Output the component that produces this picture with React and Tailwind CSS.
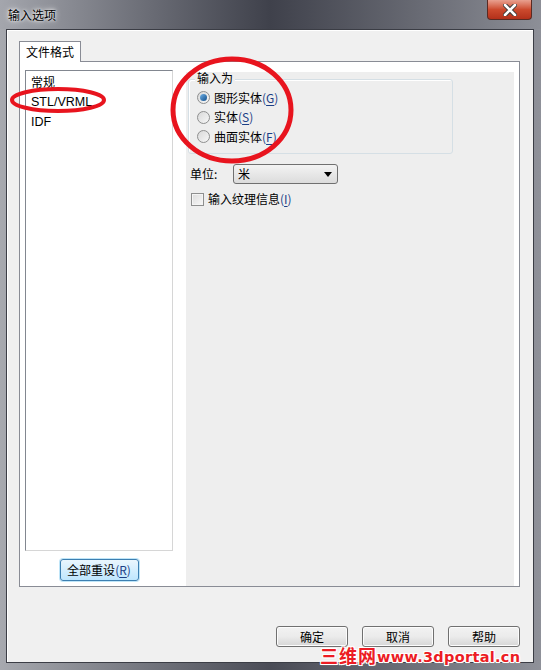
import React from 'react';

const font = "font-['Noto_Sans_CJK_SC','Noto_Sans',sans-serif]";

function Accel({ k }) {
  return (
    <span className="text-[#1d3f86]">
      (<span className="underline underline-offset-2">{k}</span>)
    </span>
  );
}

function Radio({ checked, children }) {
  return (
    <div className="flex h-[19.5px] items-center gap-[4px]">
      <span className="flex h-[13px] w-[13px] items-center justify-center rounded-full border border-[#8e8f8f] bg-gradient-to-br from-[#d9d9d9] to-[#f7f7f7]">
        {checked && <span className="h-[7px] w-[7px] rounded-full bg-gradient-to-br from-[#6fb1e6] to-[#0e4f8c]" />}
      </span>
      <span className="text-[12px] leading-none text-black">{children}</span>
    </div>
  );
}

function WinButton({ children, focused }) {
  return (
    <button
      className={
        focused
          ? 'flex h-[22px] w-[79px] items-center justify-center rounded-[3px] border border-[#3c7fb1] bg-gradient-to-b from-[#eaf6fd] to-[#bee6fd] text-[12px] text-black shadow-[0_0_0_1px_#bfe5f8]'
          : 'flex h-[21px] w-[72px] items-center justify-center rounded-[3px] border border-[#707070] bg-gradient-to-b from-[#f2f2f2] via-[#ebebeb] to-[#d6d6d6] text-[12px] text-black shadow-[inset_0_0_0_1px_#fcfcfc]'
      }
    >
      {children}
    </button>
  );
}

export default function App() {
  return (
    <div className={`relative h-[670px] w-[541px] overflow-hidden bg-white ${font}`}>
      <div className="flex h-full flex-col rounded-t-[6px] bg-gradient-to-r from-[#a7a9af] via-[#4a4c56] to-[#8f9199]">
        {/* title bar */}
        <div className="relative flex h-[29px] items-center bg-gradient-to-r from-[#a4a6ad] via-[#3f414b] to-[#8d8f97] pl-[8px]">
          <span className="text-[12px] text-black [text-shadow:0_0_6px_#fff,0_0_3px_#fff]">输入选项</span>
          <div className="absolute right-[9px] top-0 flex h-[20px] w-[45px] items-center justify-center rounded-b-[4px] border border-t-0 border-[#5a2a22] bg-gradient-to-b from-[#e8a08f] via-[#cc4a2e] to-[#b3301a]">
            <svg width="14" height="12" viewBox="0 0 14 12">
              <path d="M2 1 L12 11 M12 1 L2 11" stroke="#3a3a3a" strokeWidth="4.5" strokeLinecap="round" />
              <path d="M2 1 L12 11 M12 1 L2 11" stroke="#fff" strokeWidth="2.6" strokeLinecap="round" />
            </svg>
          </div>
        </div>

        {/* client area */}
        <div className="ml-[6px] mr-[7px] flex h-[634px] flex-col border border-[#3b3d45] bg-[#f0f0f0] pl-[12px] pt-[11px] shadow-[inset_1px_1px_0_#ffffff]">
          {/* tab header */}
          <div className="relative z-10 -mb-px flex h-[21px] w-[62px] items-center justify-center border border-b-0 border-[#898c95] bg-white text-[12px] text-black">
            文件格式
          </div>
          {/* tab panel */}
          <div className="flex h-[526px] w-[501px] border border-[#898c95] bg-white">
            <div className="ml-[5px] mt-[8px] flex w-[148px] flex-col items-center">
              <div className="h-[481px] w-[148px] border border-[#d6d6d6] border-l-[#828790] border-t-[#828790] bg-white pt-[1px] text-[12px] text-black">
                <div className="flex h-[20px] items-center px-[5px]">常规</div>
                <div className="flex h-[20px] items-center px-[5px] font-['Liberation_Sans',sans-serif] text-[12.5px]">STL/VRML</div>
                <div className="flex h-[20px] items-center px-[5px] font-['Liberation_Sans',sans-serif] text-[12.5px]">IDF</div>
              </div>
              <div className="mt-[8px]">
                <WinButton focused>
                  全部重设<Accel k="R" />
                </WinButton>
              </div>
            </div>

            <div className="ml-[13px] mr-[5px] mt-[10px] flex-1 bg-[#eeeeee] pl-[2px] pt-[7px]">
              {/* group box */}
              <div className="relative h-[75px] w-[265px] rounded-[3px] border border-[#d5dfe5] shadow-[inset_1px_1px_0_#fff]">
                <span className="absolute -top-[8px] left-[6px] bg-[#eeeeee] px-[2px] text-[12px] leading-none text-black">
                  输入为
                </span>
                <div className="pl-[8px] pt-[8px]">
                  <Radio checked>
                    图形实体<Accel k="G" />
                  </Radio>
                  <Radio>
                    实体<Accel k="S" />
                  </Radio>
                  <Radio>
                    曲面实体<Accel k="F" />
                  </Radio>
                </div>
              </div>

              <div className="ml-[2px] mt-[10px] flex items-center">
                <span className="w-[43px] text-[12px] text-black">单位:</span>
                <div className="flex h-[20px] w-[105px] items-center justify-between rounded-[3px] border border-[#707070] bg-gradient-to-b from-[#f3f3f3] to-[#dcdcdc] pl-[4px] pr-[5px] text-[12px] text-black">
                  <span>米</span>
                  <svg width="8" height="5" viewBox="0 0 8 5">
                    <path d="M0 0 H8 L4 5 Z" fill="#000" />
                  </svg>
                </div>
              </div>

              <div className="ml-[3px] mt-[6px] flex items-center gap-[4px]">
                <span className="h-[13px] w-[13px] border border-[#8e8f8f] bg-gradient-to-br from-[#dcdcdc] to-[#f8f8f8] shadow-[inset_0_0_0_1px_#f4f4f4]" />
                <span className="text-[12px] text-black">
                  输入纹理信息<Accel k="I" />
                </span>
              </div>
            </div>
          </div>

          {/* dialog buttons */}
          <div className="mt-[39px] flex justify-end gap-[14px] pr-[13px]">
            <WinButton>确定</WinButton>
            <WinButton>取消</WinButton>
            <WinButton>帮助</WinButton>
          </div>
        </div>
        <div className="h-[7px]" />
      </div>

      {/* red annotation ellipses */}
      <svg className="pointer-events-none absolute left-0 top-0" width="541" height="670">
        <ellipse cx="58" cy="100" rx="46" ry="11" fill="none" stroke="#e8141e" strokeWidth="4" />
        <ellipse cx="232" cy="110" rx="59" ry="51" fill="none" stroke="#e8141e" strokeWidth="5" />
      </svg>

      {/* watermark */}
      <div className="absolute left-[320px] top-[646px] flex items-end text-[#ec1c24] [text-shadow:1px_1px_0_#fff,-1px_-1px_0_#fff,1px_-1px_0_#fff,-1px_1px_0_#fff,0_0_2px_#fff]">
        <span className="text-[18px] font-bold leading-none tracking-[1px]">三维网</span>
        <span className="font-['DejaVu_Sans',sans-serif] text-[14.5px] font-bold leading-none tracking-[0.3px]">www.3dportal.cn</span>
      </div>
    </div>
  );
}
